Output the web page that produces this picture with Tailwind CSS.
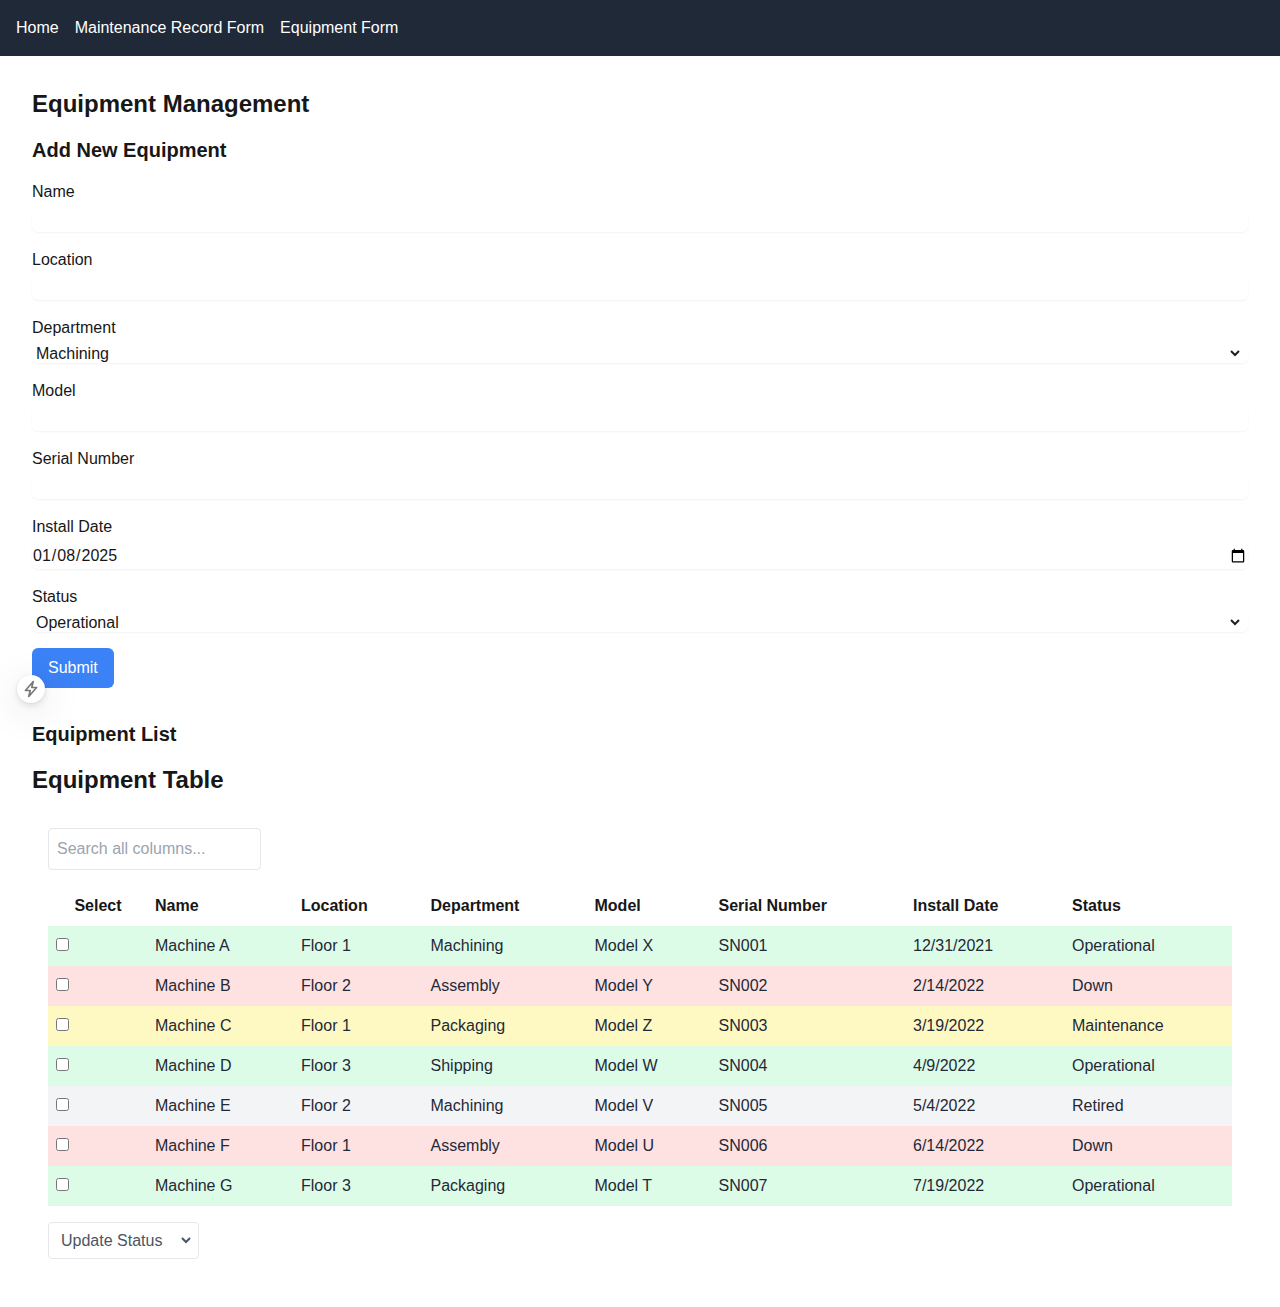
<!DOCTYPE html>
<html lang="en">
<head>
  <meta charset="UTF-8" />
  <title>Equipment Management</title>
  <script src="https://cdn.jsdelivr.net/npm/@tailwindcss/browser@4"></script>
</head>
<body class="bg-white text-[#171717] font-['Liberation_Sans',Arial,sans-serif]">

  <!-- Navbar -->
  <nav class="bg-[#1f2937] p-4 h-14">
    <ul class="flex gap-4 text-white">
      <li><a href="#">Home</a></li>
      <li><a href="#">Maintenance Record Form</a></li>
      <li><a href="#">Equipment Form</a></li>
    </ul>
  </nav>

  <main class="p-8">
    <h1 class="text-2xl font-bold mb-4">Equipment Management</h1>
    <h2 class="text-xl font-bold mb-4">Add New Equipment</h2>

    <form>
      <div class="mb-4">
        <label class="block">Name</label>
        <input type="text" class="mt-1 block w-full rounded-md shadow-[0_1px_2px_0_rgba(0,0,0,0.05)]" />
      </div>
      <div class="mb-4">
        <label class="block">Location</label>
        <input type="text" class="mt-1 block w-full rounded-md shadow-[0_1px_2px_0_rgba(0,0,0,0.05)]" />
      </div>
      <div class="mb-4">
        <label class="block">Department</label>
        <div class="relative mt-1">
          <select class="appearance-none pl-1 h-[19px] leading-[19px] block w-full rounded-md shadow-[0_1px_2px_0_rgba(0,0,0,0.05)]">
            <option>Machining</option>
            <option>Assembly</option>
            <option>Packaging</option>
            <option>Shipping</option>
          </select>
          <svg class="absolute right-[8px] top-[6px] pointer-events-none" width="10" height="7" viewBox="0 0 10 7" fill="none" stroke="#1f1f1f" stroke-width="2"><path d="M1 1l4 4 4-4" /></svg>
        </div>
      </div>
      <div class="mb-4">
        <label class="block">Model</label>
        <input type="text" class="mt-1 block w-full rounded-md shadow-[0_1px_2px_0_rgba(0,0,0,0.05)]" />
      </div>
      <div class="mb-4">
        <label class="block">Serial Number</label>
        <input type="text" class="mt-1 block w-full rounded-md shadow-[0_1px_2px_0_rgba(0,0,0,0.05)]" />
      </div>
      <div class="mb-4">
        <label class="block">Install Date</label>
        <input type="date" value="2025-01-08" class="mt-1 block w-full h-[26px] rounded-md shadow-[0_1px_2px_0_rgba(0,0,0,0.05)]" />
      </div>
      <div class="mb-4">
        <label class="block">Status</label>
        <div class="relative mt-1">
          <select class="appearance-none pl-1 h-[19px] leading-[19px] block w-full rounded-md shadow-[0_1px_2px_0_rgba(0,0,0,0.05)]">
            <option>Operational</option>
            <option>Down</option>
            <option>Maintenance</option>
            <option>Retired</option>
          </select>
          <svg class="absolute right-[8px] top-[6px] pointer-events-none" width="10" height="7" viewBox="0 0 10 7" fill="none" stroke="#1f1f1f" stroke-width="2"><path d="M1 1l4 4 4-4" /></svg>
        </div>
      </div>
      <button type="submit" class="bg-[#3b82f6] text-white px-4 py-2 rounded-md">Submit</button>
    </form>

    <h2 class="text-xl font-bold mt-8 mb-4">Equipment List</h2>
    <h1 class="text-2xl font-bold mb-4">Equipment Table</h1>

    <div class="p-4">
      <input type="text" placeholder="Search all columns..." class="block w-[213px] p-2 mb-4 border border-[#e5e7eb] rounded placeholder:text-[#9ca3af]" />

      <table class="w-full table-fixed">
        <thead>
          <tr>
            <th class="w-[99px] pl-[9px] pr-2 py-2 text-center">Select</th>
            <th class="w-[146px] px-2 py-2 text-left">Name</th>
            <th class="w-[129.5px] px-2 py-2 text-left">Location</th>
            <th class="w-[164px] px-2 py-2 text-left">Department</th>
            <th class="w-[124px] px-2 py-2 text-left">Model</th>
            <th class="w-[194.5px] px-2 py-2 text-left">Serial Number</th>
            <th class="w-[159px] px-2 py-2 text-left">Install Date</th>
            <th class="px-2 py-2 text-left">Status</th>
          </tr>
        </thead>
        <tbody class="text-[#1f2937]">
          <tr class="bg-[#dcfce7]">
            <td class="px-2 py-2"><input type="checkbox" /></td>
            <td class="px-2 py-2">Machine A</td><td class="px-2 py-2">Floor 1</td><td class="px-2 py-2">Machining</td><td class="px-2 py-2">Model X</td><td class="px-2 py-2">SN001</td><td class="px-2 py-2">12/31/2021</td><td class="px-2 py-2">Operational</td>
          </tr>
          <tr class="bg-[#fee2e2]">
            <td class="px-2 py-2"><input type="checkbox" /></td>
            <td class="px-2 py-2">Machine B</td><td class="px-2 py-2">Floor 2</td><td class="px-2 py-2">Assembly</td><td class="px-2 py-2">Model Y</td><td class="px-2 py-2">SN002</td><td class="px-2 py-2">2/14/2022</td><td class="px-2 py-2">Down</td>
          </tr>
          <tr class="bg-[#fef9c3]">
            <td class="px-2 py-2"><input type="checkbox" /></td>
            <td class="px-2 py-2">Machine C</td><td class="px-2 py-2">Floor 1</td><td class="px-2 py-2">Packaging</td><td class="px-2 py-2">Model Z</td><td class="px-2 py-2">SN003</td><td class="px-2 py-2">3/19/2022</td><td class="px-2 py-2">Maintenance</td>
          </tr>
          <tr class="bg-[#dcfce7]">
            <td class="px-2 py-2"><input type="checkbox" /></td>
            <td class="px-2 py-2">Machine D</td><td class="px-2 py-2">Floor 3</td><td class="px-2 py-2">Shipping</td><td class="px-2 py-2">Model W</td><td class="px-2 py-2">SN004</td><td class="px-2 py-2">4/9/2022</td><td class="px-2 py-2">Operational</td>
          </tr>
          <tr class="bg-[#f3f4f6]">
            <td class="px-2 py-2"><input type="checkbox" /></td>
            <td class="px-2 py-2">Machine E</td><td class="px-2 py-2">Floor 2</td><td class="px-2 py-2">Machining</td><td class="px-2 py-2">Model V</td><td class="px-2 py-2">SN005</td><td class="px-2 py-2">5/4/2022</td><td class="px-2 py-2">Retired</td>
          </tr>
          <tr class="bg-[#fee2e2]">
            <td class="px-2 py-2"><input type="checkbox" /></td>
            <td class="px-2 py-2">Machine F</td><td class="px-2 py-2">Floor 1</td><td class="px-2 py-2">Assembly</td><td class="px-2 py-2">Model U</td><td class="px-2 py-2">SN006</td><td class="px-2 py-2">6/14/2022</td><td class="px-2 py-2">Down</td>
          </tr>
          <tr class="bg-[#dcfce7]">
            <td class="px-2 py-2"><input type="checkbox" /></td>
            <td class="px-2 py-2">Machine G</td><td class="px-2 py-2">Floor 3</td><td class="px-2 py-2">Packaging</td><td class="px-2 py-2">Model T</td><td class="px-2 py-2">SN007</td><td class="px-2 py-2">7/19/2022</td><td class="px-2 py-2">Operational</td>
          </tr>
        </tbody>
      </table>

      <div class="relative mt-4 w-[151px]">
        <select class="appearance-none block w-full h-[37px] pl-[12px] border border-[#e5e7eb] rounded text-[#4b5563]">
          <option>Update Status</option>
          <option>Operational</option>
          <option>Down</option>
          <option>Maintenance</option>
          <option>Retired</option>
        </select>
        <svg class="absolute right-[8.5px] top-[15px] pointer-events-none" width="10" height="7" viewBox="0 0 10 7" fill="none" stroke="#4b5563" stroke-width="2"><path d="M1 1l4 4 4-4" /></svg>
      </div>
    </div>
  </main>

  <!-- floating badge over the page -->
  <div class="absolute left-[17px] top-[675px] w-7 h-7 rounded-full bg-white flex items-center justify-center shadow-[0_0_0_1px_rgba(0,0,0,0.03),0_3px_6px_rgba(0,0,0,0.1),0_8px_40px_rgba(0,0,0,0.14)]">
    <svg xmlns="http://www.w3.org/2000/svg" width="18" height="18" viewBox="0 0 24 24" fill="none" stroke="#777777" stroke-width="2.2" stroke-linejoin="round" stroke-linecap="round">
      <path d="M15 2 4.5 14H11L9 22 19.5 10H13z" />
    </svg>
  </div>

</body>
</html>
